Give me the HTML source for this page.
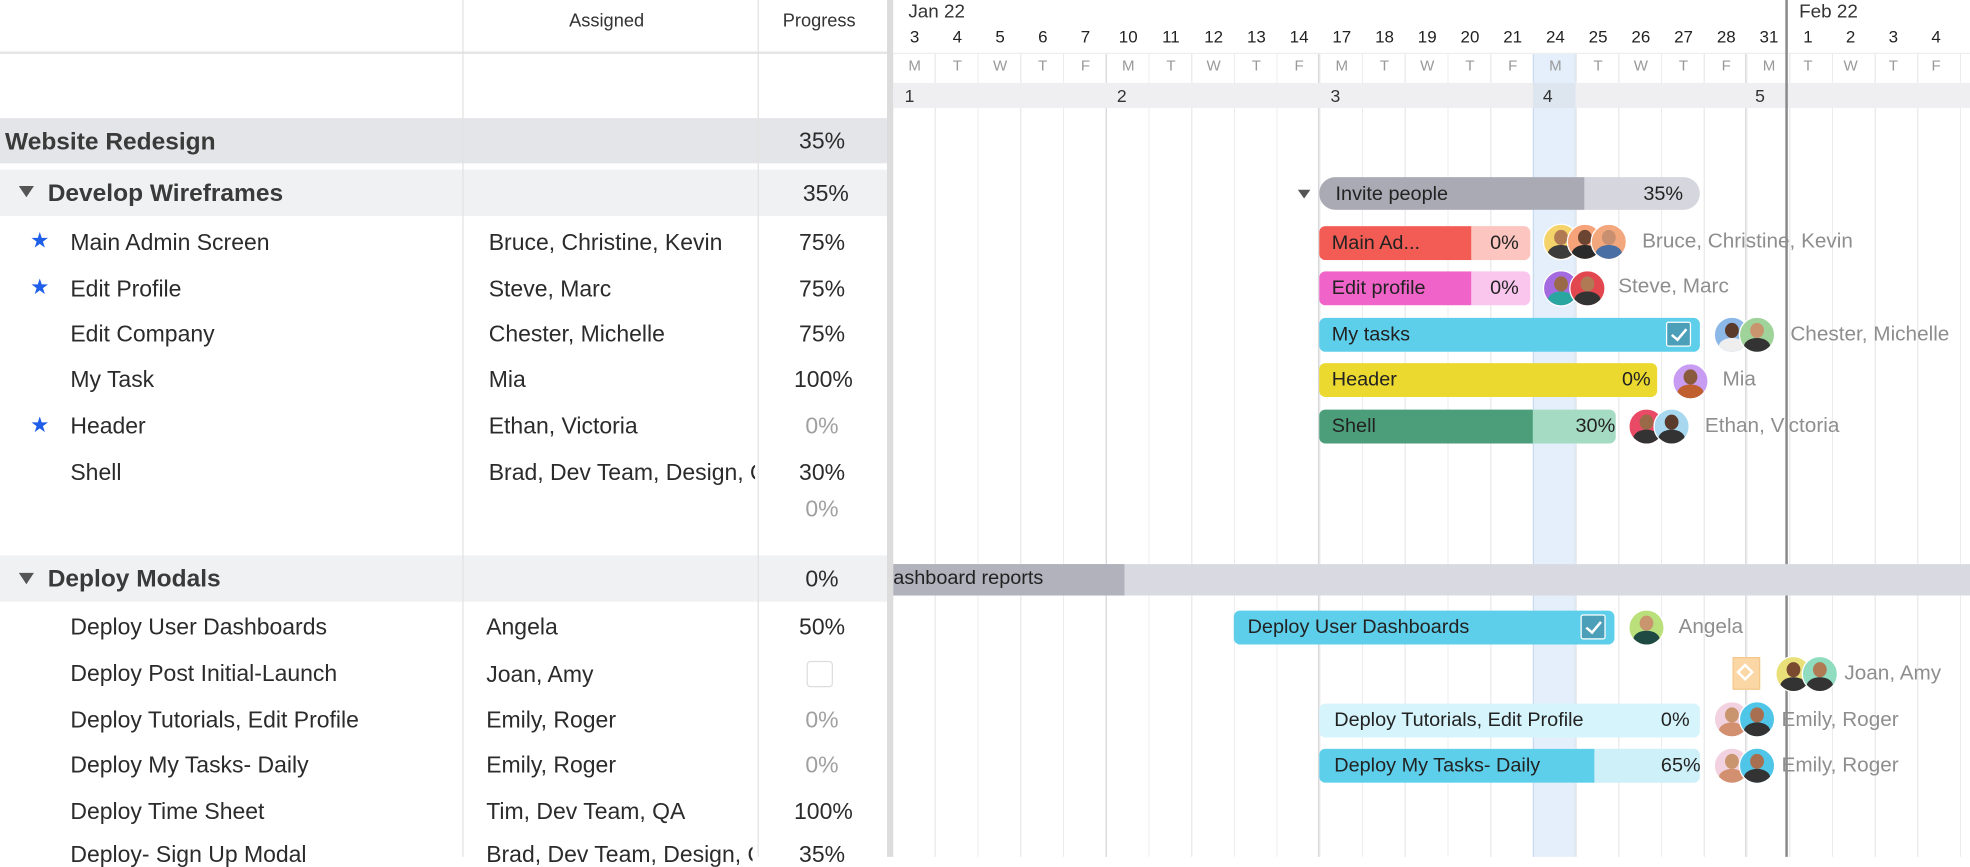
<!DOCTYPE html>
<html><head><meta charset="utf-8"><style>
html,body{margin:0;padding:0;background:#fff;overflow:hidden;width:1970px;height:856px}
#w{position:absolute;left:0;top:0;width:1568px;height:682px;transform:scale(1.25638);transform-origin:0 0;font-family:"Liberation Sans",sans-serif;color:#2b2b2b}
.a{position:absolute;white-space:nowrap}
.t{font-size:18.3px;line-height:20px}
.g{color:#a0a0a0}
.b{font-weight:bold;color:#3a3a3a;font-size:19.5px}
.bar{position:absolute;border-radius:5px;overflow:hidden;height:27px}
.bar span{position:absolute;top:5px;font-size:15.8px;color:#222;white-space:nowrap}
.av{position:absolute;width:27px;height:27px;border-radius:50%;border:1.5px solid #fff;overflow:hidden}
.av i{position:absolute;left:8px;top:4px;width:11px;height:12px;border-radius:50%;background:#8a5a3c}
.av b{position:absolute;left:3px;top:16px;width:21px;height:14px;border-radius:50% 50% 0 0;background:#333}
.nm{position:absolute;font-size:16.5px;color:#8e8e8e;white-space:nowrap}
.day{position:absolute;top:22px;width:34px;text-align:center;font-size:13.5px;color:#222}
.let{position:absolute;top:45px;width:34px;text-align:center;font-size:12px;color:#999}
.chk{position:absolute;width:18px;height:18px;background:#4c9fb9;border:1.5px solid #fff;border-radius:2px}
.chk:after{content:"";position:absolute;left:6px;top:2px;width:5px;height:10px;border:solid #fff;border-width:0 2px 2px 0;transform:rotate(40deg)}
</style></head><body><div id="w">

<div class="a" style="left:0;top:94px;width:706px;height:36px;background:#e4e5e8"></div>
<div class="a" style="left:0;top:135px;width:706px;height:37px;background:#f0f1f3"></div>
<div class="a" style="left:0;top:442px;width:706px;height:37px;background:#f0f1f3"></div>
<div class="a" style="left:0;top:41px;width:706px;height:2px;background:#e6e6e6"></div>
<div class="a" style="left:368px;top:0;width:1px;height:682px;background:#e2e2e2"></div>
<div class="a" style="left:603px;top:0;width:1px;height:682px;background:#e2e2e2"></div>
<div class="a" style="left:706px;top:0;width:5px;height:682px;background:#dcdcdc"></div>

<div class="a" style="left:453px;top:9px;font-size:14.5px;color:#333">Assigned</div>
<div class="a" style="left:623px;top:9px;font-size:14.5px;color:#333">Progress</div>

<div class="a b" style="left:4px;top:102px">Website Redesign</div>
<div class="a t" style="left:636px;top:102px">35%</div>
<div class="a" style="left:15px;top:148px;width:0;height:0;border-left:6px solid transparent;border-right:6px solid transparent;border-top:9px solid #555"></div>
<div class="a b" style="left:38px;top:143px">Develop Wireframes</div>
<div class="a t" style="left:639px;top:144px">35%</div>

<div class="a" style="left:24px;top:182px;color:#1f5ee8;font-size:17px">★</div>
<div class="a t" style="left:56px;top:183px">Main Admin Screen</div>
<div class="a t" style="left:389px;top:183px">Bruce, Christine, Kevin</div>
<div class="a t" style="left:636px;top:183px">75%</div>
<div class="a" style="left:24px;top:219px;color:#1f5ee8;font-size:17px">★</div>
<div class="a t" style="left:56px;top:220px">Edit Profile</div>
<div class="a t" style="left:389px;top:220px">Steve, Marc</div>
<div class="a t" style="left:636px;top:220px">75%</div>
<div class="a t" style="left:56px;top:256px">Edit Company</div>
<div class="a t" style="left:389px;top:256px">Chester, Michelle</div>
<div class="a t" style="left:636px;top:256px">75%</div>
<div class="a t" style="left:56px;top:292px">My Task</div>
<div class="a t" style="left:389px;top:292px">Mia</div>
<div class="a t" style="left:632px;top:292px">100%</div>
<div class="a" style="left:24px;top:329px;color:#1f5ee8;font-size:17px">★</div>
<div class="a t" style="left:56px;top:329px">Header</div>
<div class="a t" style="left:389px;top:329px">Ethan, Victoria</div>
<div class="a t g" style="left:641px;top:329px">0%</div>
<div class="a t" style="left:56px;top:366px">Shell</div>
<div class="a t" style="left:389px;top:366px;width:212px;overflow:hidden">Brad, Dev Team, Design, QA</div>
<div class="a t" style="left:636px;top:366px">30%</div>
<div class="a t g" style="left:641px;top:395px">0%</div>

<div class="a" style="left:15px;top:456px;width:0;height:0;border-left:6px solid transparent;border-right:6px solid transparent;border-top:9px solid #555"></div>
<div class="a b" style="left:38px;top:450px">Deploy Modals</div>
<div class="a t" style="left:641px;top:451px">0%</div>

<div class="a t" style="left:56px;top:489px">Deploy User Dashboards</div>
<div class="a t" style="left:387px;top:489px">Angela</div>
<div class="a t" style="left:636px;top:489px">50%</div>
<div class="a t" style="left:56px;top:526px">Deploy Post Initial-Launch</div>
<div class="a t" style="left:387px;top:527px">Joan, Amy</div>
<div class="a" style="left:642px;top:526px;width:19px;height:19px;border:1.5px solid #ddd;border-radius:3px"></div>
<div class="a t" style="left:56px;top:563px">Deploy Tutorials, Edit Profile</div>
<div class="a t" style="left:387px;top:563px">Emily, Roger</div>
<div class="a t g" style="left:641px;top:563px">0%</div>
<div class="a t" style="left:56px;top:599px">Deploy My Tasks- Daily</div>
<div class="a t" style="left:387px;top:599px">Emily, Roger</div>
<div class="a t g" style="left:641px;top:599px">0%</div>
<div class="a t" style="left:56px;top:636px">Deploy Time Sheet</div>
<div class="a t" style="left:387px;top:636px">Tim, Dev Team, QA</div>
<div class="a t" style="left:632px;top:636px">100%</div>
<div class="a t" style="left:56px;top:670px">Deploy- Sign Up Modal</div>
<div class="a t" style="left:387px;top:670px;width:212px;overflow:hidden">Brad, Dev Team, Design, QA</div>
<div class="a t" style="left:636px;top:670px">35%</div>

<div class="a" style="left:711px;top:42px;width:857px;height:640px;background:repeating-linear-gradient(to right,transparent 0 33px,#ececef 33px 34px)"></div>
<div class="a" style="left:1220px;top:42px;width:34px;height:640px;background:#e4effb;border-left:1px solid #c9dcee;border-right:1px solid #d8e6f3;box-sizing:border-box"></div>
<div class="a" style="left:880px;top:42px;width:1px;height:640px;background:#d9d9dc"></div>
<div class="a" style="left:1049px;top:42px;width:1px;height:640px;background:#d9d9dc"></div>
<div class="a" style="left:1389px;top:42px;width:1px;height:640px;background:#d9d9dc"></div>
<div class="a" style="left:711px;top:66px;width:857px;height:20px;background:#efeff1"></div>
<div class="a" style="left:1220px;top:66px;width:34px;height:20px;background:#dde6ef"></div>
<div class="a" style="left:711px;top:41px;width:857px;height:2px;background:#eeeeee"></div>
<div class="a" style="left:711px;top:0;width:857px;height:42px;background:#fff"></div>
<div class="a" style="left:1421px;top:0;width:1.5px;height:682px;background:#8a8a8a"></div>

<div class="a" style="left:723px;top:1px;font-size:15px;color:#333">Jan 22</div>
<div class="a" style="left:1432px;top:1px;font-size:15px;color:#333">Feb 22</div>
<div class="day" style="left:711px">3</div><div class="day" style="left:745px">4</div><div class="day" style="left:779px">5</div><div class="day" style="left:813px">6</div><div class="day" style="left:847px">7</div>
<div class="day" style="left:881px">10</div><div class="day" style="left:915px">11</div><div class="day" style="left:949px">12</div><div class="day" style="left:983px">13</div><div class="day" style="left:1017px">14</div>
<div class="day" style="left:1051px">17</div><div class="day" style="left:1085px">18</div><div class="day" style="left:1119px">19</div><div class="day" style="left:1153px">20</div><div class="day" style="left:1187px">21</div>
<div class="day" style="left:1221px">24</div><div class="day" style="left:1255px">25</div><div class="day" style="left:1289px">26</div><div class="day" style="left:1323px">27</div><div class="day" style="left:1357px">28</div>
<div class="day" style="left:1391px">31</div><div class="day" style="left:1422px">1</div><div class="day" style="left:1456px">2</div><div class="day" style="left:1490px">3</div><div class="day" style="left:1524px">4</div>

<div class="let" style="left:711px">M</div><div class="let" style="left:745px">T</div><div class="let" style="left:779px">W</div><div class="let" style="left:813px">T</div><div class="let" style="left:847px">F</div>
<div class="let" style="left:881px">M</div><div class="let" style="left:915px">T</div><div class="let" style="left:949px">W</div><div class="let" style="left:983px">T</div><div class="let" style="left:1017px">F</div>
<div class="let" style="left:1051px">M</div><div class="let" style="left:1085px">T</div><div class="let" style="left:1119px">W</div><div class="let" style="left:1153px">T</div><div class="let" style="left:1187px">F</div>
<div class="let" style="left:1221px">M</div><div class="let" style="left:1255px">T</div><div class="let" style="left:1289px">W</div><div class="let" style="left:1323px">T</div><div class="let" style="left:1357px">F</div>
<div class="let" style="left:1391px">M</div><div class="let" style="left:1422px">T</div><div class="let" style="left:1456px">W</div><div class="let" style="left:1490px">T</div><div class="let" style="left:1524px">F</div>

<div class="a" style="left:720px;top:68px;font-size:14px;color:#333">1</div>
<div class="a" style="left:889px;top:68px;font-size:14px;color:#333">2</div>
<div class="a" style="left:1059px;top:68px;font-size:14px;color:#333">3</div>
<div class="a" style="left:1228px;top:68px;font-size:14px;color:#333">4</div>
<div class="a" style="left:1397px;top:68px;font-size:14px;color:#333">5</div>

<div class="a" style="left:1033px;top:151px;width:0;height:0;border-left:5px solid transparent;border-right:5px solid transparent;border-top:7px solid #555"></div>
<div class="bar" style="left:1050px;top:141px;width:303px;height:26px;border-radius:13px;background:#d6d7de"><div class="a" style="left:0;top:0;width:211px;height:26px;background:#a9aab3"></div><span style="left:13px">Invite people</span><span style="left:258px">35%</span></div>

<div class="bar" style="left:1050px;top:180px;width:168px;background:#fcc5bf"><div class="a" style="left:0;top:0;width:121px;height:27px;background:#f25c54"></div><span style="left:10px">Main Ad...</span><span style="left:136px">0%</span></div>
<div class="bar" style="left:1050px;top:216px;width:168px;background:#fbc6ee"><div class="a" style="left:0;top:0;width:121px;height:27px;background:#f063c9"></div><span style="left:10px">Edit profile</span><span style="left:136px">0%</span></div>
<div class="bar" style="left:1050px;top:253px;width:303px;background:#5ecfeb"><span style="left:10px">My tasks</span><div class="chk" style="left:276px;top:3px"></div></div>
<div class="bar" style="left:1050px;top:289px;width:269px;background:#ebd92f"><span style="left:10px">Header</span><span style="left:241px">0%</span></div>
<div class="bar" style="left:1050px;top:326px;width:236px;background:#a4dbc2"><div class="a" style="left:0;top:0;width:170px;height:27px;background:#4b9e79"></div><span style="left:10px">Shell</span><span style="left:204px">30%</span></div>

<div class="a" style="left:711px;top:449px;width:857px;height:25px;background:#d9dae1"></div>
<div class="a" style="left:711px;top:449px;width:184px;height:25px;background:#b1b2bc"></div>
<div class="a" style="left:711px;top:452px;font-size:15.8px;color:#222">ashboard reports</div>

<div class="bar" style="left:982px;top:486px;width:303px;background:#5ecfeb"><span style="left:11px">Deploy User Dashboards</span><div class="chk" style="left:276px;top:3px"></div></div>
<div class="a" style="left:1379px;top:523px;width:22px;height:26px;background:#fbd7a6;border:1px solid #f5c78a;box-sizing:border-box"></div>
<div class="a" style="left:1384px;top:530px;width:10px;height:10px;border:2px solid #fff;transform:rotate(45deg);box-sizing:border-box"></div>
<div class="bar" style="left:1050px;top:560px;width:303px;background:#d6f4fc"><span style="left:12px">Deploy Tutorials, Edit Profile</span><span style="left:272px">0%</span></div>
<div class="bar" style="left:1050px;top:596px;width:303px;background:#cdf0f9"><div class="a" style="left:0;top:0;width:219px;height:27px;background:#5ecfeb"></div><span style="left:12px">Deploy My Tasks- Daily</span><span style="left:272px">65%</span></div>

<div class="av" style="left:1228px;top:178px;background:#f4d36a"><i style="background:#b07a55"></i><b style="background:#3c3c3c"></b></div>
<div class="av" style="left:1247px;top:178px;background:#f6a37a"><i style="background:#6b4432"></i><b style="background:#2a2a2a"></b></div>
<div class="av" style="left:1266px;top:178px;background:#f2a77c"><i style="background:#c89070"></i><b style="background:#4a6fa5"></b></div>
<div class="nm" style="left:1307px;top:183px">Bruce, Christine, Kevin</div>
<div class="av" style="left:1228px;top:215px;background:#a46be0"><i style="background:#9a6a48"></i><b style="background:#2aa6a0"></b></div>
<div class="av" style="left:1249px;top:215px;background:#e2474f"><i style="background:#b07a55"></i><b style="background:#333"></b></div>
<div class="nm" style="left:1288px;top:219px">Steve, Marc</div>
<div class="av" style="left:1364px;top:252px;background:#8cb8e8"><i style="background:#5a3a2a"></i><b style="background:#eee"></b></div>
<div class="av" style="left:1384px;top:252px;background:#9fd39a"><i style="background:#c8956e"></i><b style="background:#333"></b></div>
<div class="nm" style="left:1425px;top:257px">Chester, Michelle</div>
<div class="av" style="left:1331px;top:289px;background:#c79cf2"><i style="background:#8a5a3c"></i><b style="background:#c06030"></b></div>
<div class="nm" style="left:1371px;top:293px">Mia</div>
<div class="av" style="left:1296px;top:325px;background:#e94a65"><i style="background:#9a6a48"></i><b style="background:#333"></b></div>
<div class="av" style="left:1316px;top:325px;background:#a7d8f0"><i style="background:#5a3a2a"></i><b style="background:#333"></b></div>
<div class="nm" style="left:1357px;top:330px">Ethan, Victoria</div>
<div class="av" style="left:1296px;top:485px;background:#b9e07a"><i style="background:#c8956e"></i><b style="background:#1f4a44"></b></div>
<div class="nm" style="left:1336px;top:490px">Angela</div>
<div class="av" style="left:1413px;top:522px;background:#e9e07a"><i style="background:#7a4a30"></i><b style="background:#333"></b></div>
<div class="av" style="left:1434px;top:522px;background:#8fdcc0"><i style="background:#b07a55"></i><b style="background:#333"></b></div>
<div class="nm" style="left:1468px;top:527px">Joan, Amy</div>
<div class="av" style="left:1364px;top:558px;background:#f2d2e0"><i style="background:#c8956e"></i><b style="background:#d29070"></b></div>
<div class="av" style="left:1384px;top:558px;background:#4fc5e8"><i style="background:#a87050"></i><b style="background:#333"></b></div>
<div class="nm" style="left:1418px;top:564px">Emily, Roger</div>
<div class="av" style="left:1364px;top:595px;background:#f2d2e0"><i style="background:#c8956e"></i><b style="background:#d29070"></b></div>
<div class="av" style="left:1384px;top:595px;background:#4fc5e8"><i style="background:#a87050"></i><b style="background:#333"></b></div>
<div class="nm" style="left:1418px;top:600px">Emily, Roger</div>

</div></body></html>
